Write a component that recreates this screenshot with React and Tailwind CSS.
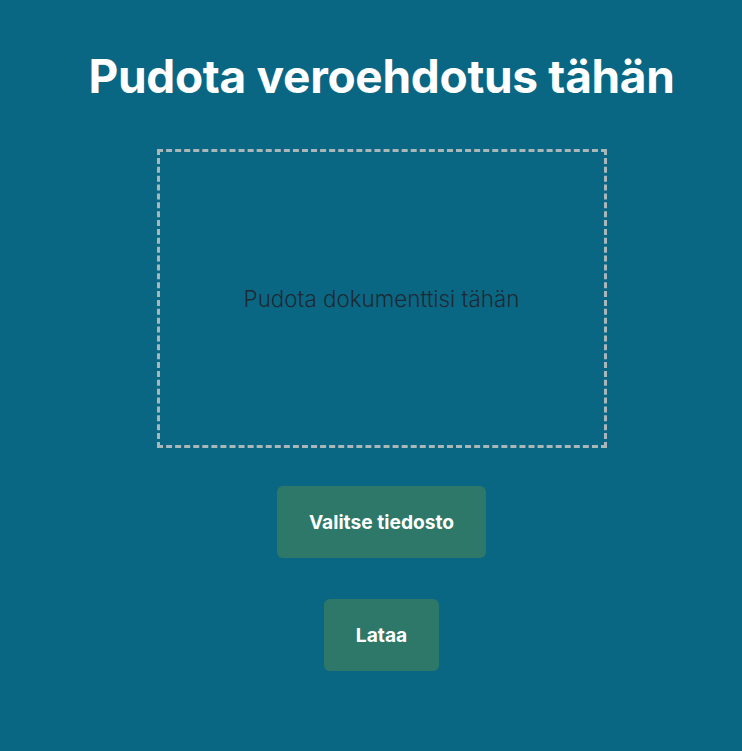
export default function App() {
  return (
    <div
      className="min-h-screen w-full bg-[#0a6784] flex flex-col items-center pl-[21px]"
      style={{ fontFamily: 'Inter, "Noto Sans", sans-serif' }}
    >
      <h1 className="mt-[48px] text-[46px] leading-[56px] font-bold text-white tracking-[-0.3px]">
        Pudota veroehdotus tähän
      </h1>

      <div className="mt-[45px] w-[450px] h-[299px] border-[3px] border-dashed border-[#a9b7bb] flex items-center justify-center">
        <p className="text-[22.4px] font-light text-[#1e2a33]">Pudota dokumenttisi tähän</p>
      </div>

      <button className="mt-[38px] h-[72px] px-8 rounded-md bg-[#2d7868] text-white text-[19.2px] font-bold">
        Valitse tiedosto
      </button>

      <button className="mt-[41px] h-[72px] px-8 rounded-md bg-[#2d7868] text-white text-[19.2px] font-bold">
        Lataa
      </button>
    </div>
  );
}
